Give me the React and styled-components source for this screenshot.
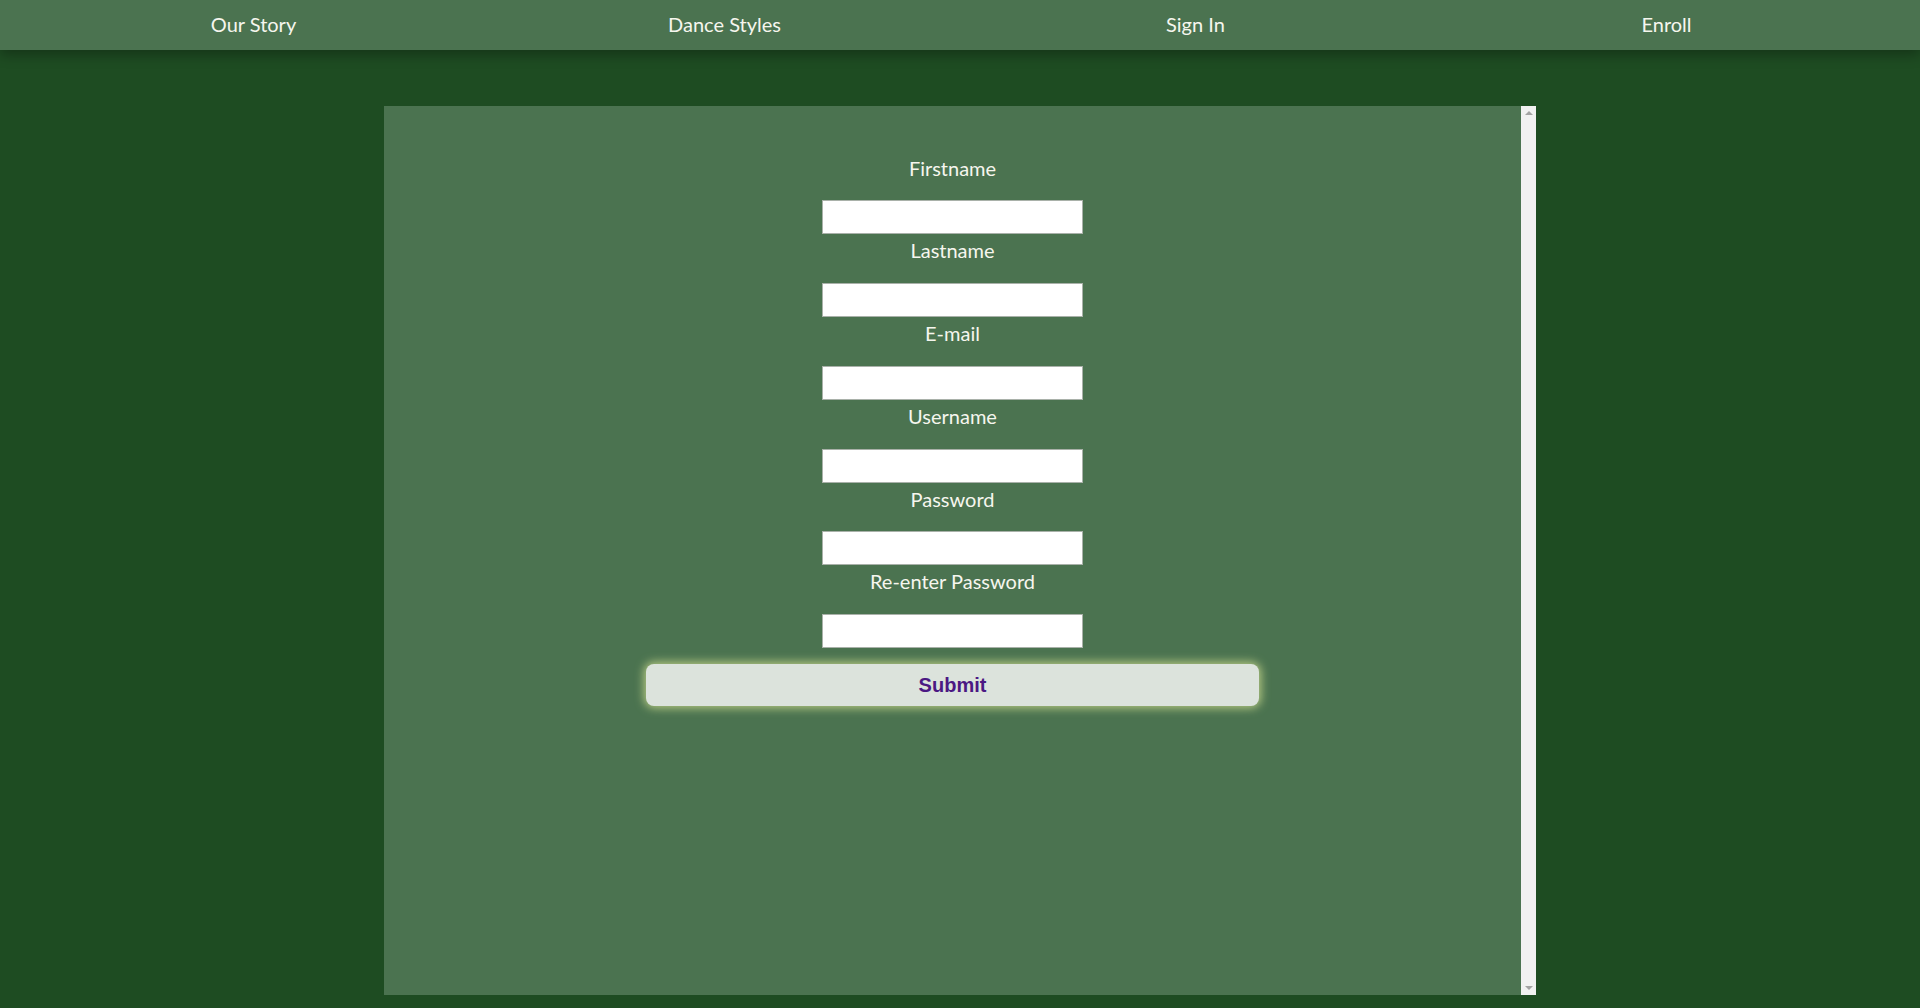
import React from 'react';
import styled, { createGlobalStyle } from 'styled-components';

const GlobalStyle = createGlobalStyle`
  html, body { margin: 0; padding: 0; background: #1e4c22; }
  body { font-family: Lato, "Noto Sans", sans-serif; color: #f6f6ee; }
  * { box-sizing: border-box; }
`;

const fields = ['Firstname', 'Lastname', 'E-mail', 'Username', 'Password', 'Re-enter Password'];

const App = () => {
  return (
    <>
      <GlobalStyle />
      <Nav>
        <NavLink>Our Story</NavLink>
        <NavLink>Dance Styles</NavLink>
        <NavLink>Sign In</NavLink>
        <NavLink>Enroll</NavLink>
      </Nav>
      <Panel>
        <Content>
          <Form onSubmit={(e) => e.preventDefault()}>
            {fields.map((f) => (
              <Field key={f}>
                <Label>{f}</Label>
                <Input type={f.includes('Password') ? 'password' : 'text'} />
              </Field>
            ))}
            <SubmitButton type="submit">Submit</SubmitButton>
          </Form>
        </Content>
        <ScrollTrack>
          <Arrow />
          <Arrow $down />
        </ScrollTrack>
      </Panel>
    </>
  );
};

export default App;

const Nav = styled.nav` position: relative; z-index: 1; display: flex; height: 50px; padding: 0 18px; background: #4b7350; box-shadow: 0 5px 12px rgba(0,0,0,0.3); `;
const NavLink = styled.a` flex: 1; display: flex; align-items: center; justify-content: center; padding-bottom: 2px; font-size: 20px; color: #f6f6ee; cursor: pointer; `;
const Panel = styled.main` display: flex; width: 1152px; height: 889px; margin: 56px auto 0; background: #4b7350; `;
const Content = styled.div` flex: 1; overflow-y: auto; `;
const ScrollTrack = styled.div` width: 15px; background: #f1f1f1; display: flex; flex-direction: column; justify-content: space-between; align-items: center; padding: 5px 0; `;
const Arrow = styled.span` width: 0; height: 0; border-left: 4px solid transparent; border-right: 4px solid transparent; ${(p) => (p.$down ? 'border-top: 4px solid #a3a3a3;' : 'border-bottom: 4px solid #a3a3a3;')} `;
const Form = styled.form` display: flex; flex-direction: column; align-items: center; padding-top: 45.5px; `;
const Field = styled.div` display: flex; flex-direction: column; align-items: center; `;
const Label = styled.label` display: block; height: 28px; padding-top: 5px; margin-bottom: 20.8px; font-size: 20px; line-height: 23px; color: #f6f6ee; `;
const Input = styled.input` width: 261px; height: 34px; border: 1px solid #a9b1a9; background: #fff; font-size: 16px; padding: 2px 6px; outline: none; `;
const SubmitButton = styled.button` width: 613px; height: 42px; margin-top: 16px; border: none; border-radius: 8px; background: #dce3dc; color: #4b1883; font-family: "Liberation Sans", Arial, sans-serif; font-size: 20px; font-weight: bold; box-shadow: 0 0 10px 2px rgba(220,232,150,0.75); cursor: pointer; `;
